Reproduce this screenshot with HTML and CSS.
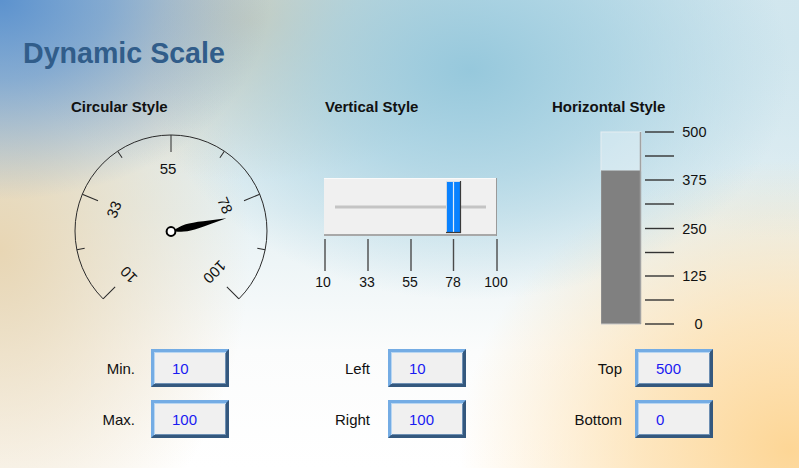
FILE: index.html
```html
<!DOCTYPE html>
<html lang="en">
<head>
<meta charset="utf-8">
<title>Dynamic Scale</title>
<link rel="stylesheet" href="styles.css">
</head>
<body>
<main class="page">
  <h1 class="title">Dynamic Scale</h1>
  <div class="panels">
    <section class="panel panel-circ">
      <h2 class="panel-title">Circular Style</h2>
      <svg class="widget" width="300" height="224" viewBox="0 116 300 224">
        <g transform="translate(171 231)" stroke="#2a2a2a" fill="none" stroke-width="1">
          <path d="M -67.88 67.88 A 96 96 0 1 1 67.88 67.88"/>
          <line x1="0" y1="-96" x2="0" y2="-79" transform="rotate(-135)"/>
          <line x1="0" y1="-96" x2="0" y2="-79" transform="rotate(-67.5)"/>
          <line x1="0" y1="-96" x2="0" y2="-79"/>
          <line x1="0" y1="-96" x2="0" y2="-79" transform="rotate(67.5)"/>
          <line x1="0" y1="-96" x2="0" y2="-79" transform="rotate(135)"/>
          <line x1="0" y1="-96" x2="0" y2="-88" transform="rotate(-101.25)"/>
          <line x1="0" y1="-96" x2="0" y2="-88" transform="rotate(-33.75)"/>
          <line x1="0" y1="-96" x2="0" y2="-88" transform="rotate(33.75)"/>
          <line x1="0" y1="-96" x2="0" y2="-88" transform="rotate(101.25)"/>
        </g>
        <g transform="translate(171 231)" class="gauge-labels" text-anchor="middle">
          <text transform="rotate(-135) translate(-1 -61)" dy="0.36em">10</text>
          <text transform="rotate(-67.5) translate(-2 -61)" dy="0.36em">33</text>
          <text transform="translate(-3 -62)" dy="0.36em">55</text>
          <text transform="rotate(67.5) translate(-3 -60)" dy="0.36em">78</text>
          <text transform="rotate(135) translate(-2 -60)" dy="0.36em">100</text>
        </g>
        <g transform="translate(171 231.5) rotate(76.5)">
          <path d="M 0 -57 C 1.5 -42, 4.2 -24, 3.6 -16 C 3 -10, 1.6 -6.5, 0.9 -4 L -0.9 -4 C -1.6 -6.5, -3 -10, -3.6 -16 C -4.2 -24, -1.5 -42, 0 -57 Z" fill="#000"/>
        </g>
        <circle cx="171" cy="231.5" r="4.4" fill="#fff" stroke="#000" stroke-width="2"/>
      </svg>
      <div class="fields">
        <div class="field"><span class="lbl">Min.</span><span class="box">10</span></div>
        <div class="field"><span class="lbl">Max.</span><span class="box">100</span></div>
      </div>
    </section>

    <section class="panel panel-vert">
      <h2 class="panel-title">Vertical Style</h2>
      <svg class="widget" width="230" height="224" viewBox="300 116 230 224">
        <rect x="324" y="178" width="173" height="58" fill="#f0f0f0"/>
        <line x1="324" y1="178.5" x2="496" y2="178.5" stroke="#fafafa" stroke-width="1"/>
        <line x1="324" y1="235" x2="497" y2="235" stroke="#a8a8a8" stroke-width="2"/>
        <line x1="496.5" y1="178" x2="496.5" y2="236" stroke="#9a9a9a" stroke-width="1"/>
        <rect x="335" y="205.5" width="151" height="3" fill="#c4c4c4"/>
        <rect x="446" y="181" width="15" height="52" fill="#0a82ff"/>
        <line x1="446.5" y1="181" x2="446.5" y2="233" stroke="#d0d8e0" stroke-width="1"/>
        <line x1="446" y1="181.5" x2="461" y2="181.5" stroke="#d8e0e8" stroke-width="1"/>
        <line x1="453.5" y1="182" x2="453.5" y2="232" stroke="#e6eef6" stroke-width="1.2"/>
        <line x1="460.5" y1="181" x2="460.5" y2="233" stroke="#3a3a3a" stroke-width="1.2"/>
        <line x1="446" y1="232.5" x2="461" y2="232.5" stroke="#3a3a3a" stroke-width="1.2"/>
        <g stroke="#4a4a4a" stroke-width="1.4">
          <line x1="325" y1="239" x2="325" y2="271"/>
          <line x1="368" y1="239" x2="368" y2="271"/>
          <line x1="411" y1="239" x2="411" y2="271"/>
          <line x1="453.5" y1="239" x2="453.5" y2="271"/>
          <line x1="497" y1="239" x2="497" y2="271"/>
        </g>
        <g class="scale-labels" text-anchor="middle">
          <text x="323" y="286.5">10</text>
          <text x="367" y="286.5">33</text>
          <text x="410" y="286.5">55</text>
          <text x="453" y="286.5">78</text>
          <text x="496" y="286.5">100</text>
        </g>
      </svg>
      <div class="fields">
        <div class="field"><span class="lbl">Left</span><span class="box">10</span></div>
        <div class="field"><span class="lbl">Right</span><span class="box">100</span></div>
      </div>
    </section>

    <section class="panel panel-horz">
      <h2 class="panel-title">Horizontal Style</h2>
      <svg class="widget" width="269" height="224" viewBox="530 116 269 224">
        <rect x="601" y="132" width="40" height="39" fill="rgba(235,245,248,0.45)" stroke="#e6eef2" stroke-width="1"/>
        <rect x="601" y="170.5" width="40" height="153.5" fill="#808080"/>
        <line x1="601.5" y1="171" x2="601.5" y2="324" stroke="#8e8e8e" stroke-width="1"/>
        <line x1="601" y1="324" x2="641" y2="324" stroke="#c8c8c8" stroke-width="1"/>
        <line x1="640.5" y1="132" x2="640.5" y2="324" stroke="#a2a2a2" stroke-width="1.5"/>
        <g stroke="#333" stroke-width="1.4">
          <line x1="645" y1="132" x2="674" y2="132"/>
          <line x1="645" y1="156" x2="674" y2="156"/>
          <line x1="645" y1="180" x2="674" y2="180"/>
          <line x1="645" y1="204" x2="674" y2="204"/>
          <line x1="645" y1="228.5" x2="674" y2="228.5"/>
          <line x1="645" y1="252.5" x2="674" y2="252.5"/>
          <line x1="645" y1="276" x2="674" y2="276"/>
          <line x1="645" y1="300" x2="674" y2="300"/>
          <line x1="645" y1="324" x2="674" y2="324"/>
        </g>
        <g class="bar-labels" text-anchor="end">
          <text x="706.5" y="137">500</text>
          <text x="706.5" y="185">375</text>
          <text x="706.5" y="233.5">250</text>
          <text x="706.5" y="281">125</text>
          <text x="702.5" y="329">0</text>
        </g>
      </svg>
      <div class="fields">
        <div class="field"><span class="lbl">Top</span><span class="box">500</span></div>
        <div class="field"><span class="lbl">Bottom</span><span class="box">0</span></div>
      </div>
    </section>
  </div>
</main>
</body>
</html>
```

FILE: styles.css
```css
html, body {
  margin: 0;
  padding: 0;
}

body {
  width: 799px;
  height: 468px;
  overflow: hidden;
  font-family: "Liberation Sans", Arial, sans-serif;
  color: #111;
  background:
    radial-gradient(ellipse 270px 200px at 0 0, rgba(92,146,206,1) 0%, rgba(104,154,208,0.75) 40%, rgba(104,154,208,0) 100%),
    radial-gradient(ellipse 320px 230px at 470px 70px, rgba(150,200,220,1) 0%, rgba(160,206,224,0.7) 45%, rgba(160,206,224,0) 100%),
    radial-gradient(ellipse 250px 160px at 250px 20px, rgba(216,204,178,1) 0%, rgba(216,204,178,0) 100%),
    radial-gradient(ellipse 330px 290px at 790px 450px, rgba(253,214,150,1) 0%, rgba(253,222,170,0.75) 45%, rgba(253,222,170,0) 100%),
    radial-gradient(ellipse 250px 330px at 0 250px, rgba(232,214,180,1) 0%, rgba(232,214,180,0) 100%),
    radial-gradient(ellipse 260px 200px at 799px 40px, rgba(208,230,238,1) 0%, rgba(208,230,238,0) 100%),
    linear-gradient(180deg, #d6e8ef 0%, #e6f1f4 45%, #fbfcfc 75%, #ffffff 100%);
}

.page {
  width: 799px;
  height: 468px;
}

.title {
  margin: 0;
  padding: 37px 0 0 23px;
  font-size: 28.6px;
  line-height: 32px;
  font-weight: bold;
  color: #315d8a;
}

.panels {
  display: grid;
  grid-template-columns: 300px 230px 269px;
  margin-top: 29px;
}

.panel-title {
  margin: 0;
  font-size: 15px;
  line-height: 18px;
  font-weight: bold;
  color: #111;
}

.panel-circ .panel-title { padding-left: 71px; }
.panel-vert .panel-title { padding-left: 25px; }
.panel-horz .panel-title { padding-left: 22px; }

.widget {
  display: block;
}

.gauge-labels,
.scale-labels,
.bar-labels {
  font-family: "Liberation Sans", Arial, sans-serif;
  fill: #111;
}

.gauge-labels { font-size: 15px; }
.scale-labels { font-size: 14px; }
.bar-labels { font-size: 14.5px; }

.fields {
  margin-top: 9px;
  display: flex;
  flex-direction: column;
  gap: 13px;
}

.field {
  display: flex;
  align-items: center;
  height: 38px;
}

.lbl {
  font-size: 15px;
  text-align: right;
  color: #111;
}

.panel-circ .lbl { width: 135px; margin-right: 16px; }
.panel-vert .lbl { width: 70px; margin-right: 18px; }
.panel-horz .lbl { width: 92px; margin-right: 13px; }

.box {
  box-sizing: border-box;
  width: 78px;
  height: 38px;
  display: flex;
  align-items: center;
  padding-left: 18px;
  font-size: 15px;
  color: #1a1af2;
  background: #f0f0f0;
  border: 3px solid;
  border-color: #74ace4 #34587e #34587e #74ace4;
  box-shadow: inset 1px 1px 0 #b8d6f2, inset -1px -1px 0 #6d8fb3;
}
```
